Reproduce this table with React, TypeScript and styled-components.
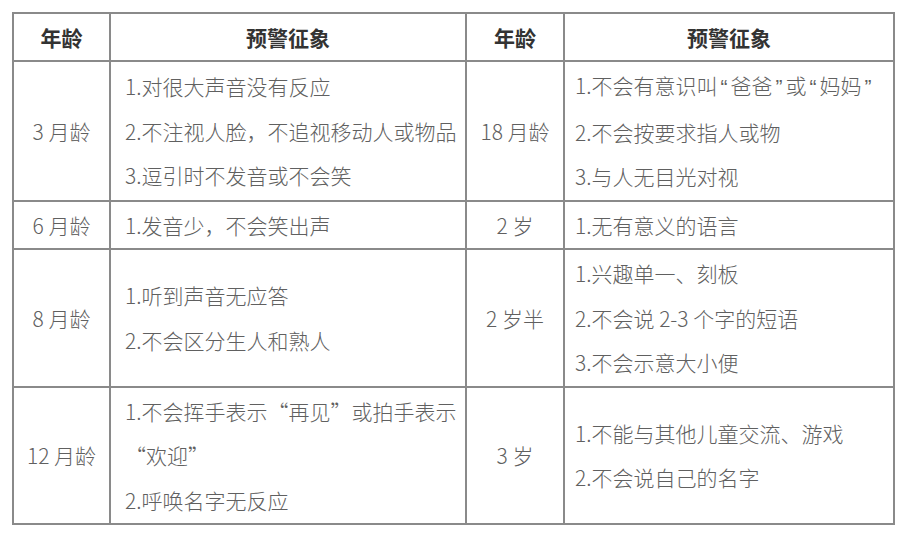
import React from "react";
import styled, { createGlobalStyle } from "styled-components";

const GlobalStyle = createGlobalStyle`
  html, body {
    margin: 0;
    padding: 0;
    background: #fff;
  }
  body {
    font-family: "Noto Sans CJK SC", "Liberation Sans", sans-serif;
  }
`;

const Page = styled.div`
  padding: 12px 0 0 12px;
`;

const Table = styled.table`
  width: 881px;
  table-layout: fixed;
  border-collapse: collapse;
  border: 2px solid #8a8a8a;
  font-size: 21px;
  font-weight: 300;
  color: #606060;
`;

const HeadCell = styled.th`
  height: 46px;
  padding: 0;
  border: 2px solid #8a8a8a;
  font-weight: 700;
  color: #333;
  text-align: center;
  line-height: 42px;
`;

const AgeCell = styled.td`
  padding: 0;
  border: 2px solid #8a8a8a;
  text-align: center;
  vertical-align: middle;
  line-height: 44px;
`;

const SignCell = styled.td<{ $pad: number }>`
  padding: 1px 4px 1px ${(p) => p.$pad}px;
  border: 2px solid #8a8a8a;
  text-align: left;
  vertical-align: middle;
  line-height: 44.5px;
  white-space: nowrap;
`;

const Item = styled.div``;

// quotes in the 18-month cell are half-width ones
const Tight = styled.span`
  font-family: "Liberation Sans", sans-serif;
  margin: 0 3px;
`;

type Row = {
  left: { age: string; signs: React.ReactNode[] };
  right: { age: string; signs: React.ReactNode[] };
};

const rows: Row[] = [
  {
    left: {
      age: "3 月龄",
      signs: [
        "1.对很大声音没有反应",
        "2.不注视人脸，不追视移动人或物品",
        "3.逗引时不发音或不会笑",
      ],
    },
    right: {
      age: "18 月龄",
      signs: [
        <>
          1.不会有意识叫<Tight>“</Tight>爸爸<Tight>”</Tight>或<Tight>“</Tight>妈妈<Tight>”</Tight>
        </>,
        "2.不会按要求指人或物",
        "3.与人无目光对视",
      ],
    },
  },
  {
    left: { age: "6 月龄", signs: ["1.发音少，不会笑出声"] },
    right: { age: "2 岁", signs: ["1.无有意义的语言"] },
  },
  {
    left: { age: "8 月龄", signs: ["1.听到声音无应答", "2.不会区分生人和熟人"] },
    right: {
      age: "2 岁半",
      signs: ["1.兴趣单一、刻板", "2.不会说 2-3 个字的短语", "3.不会示意大小便"],
    },
  },
  {
    left: {
      age: "12 月龄",
      signs: [
        <>
          1.不会挥手表示“再见”或拍手表示
          <br />
          “欢迎”
        </>,
        "2.呼唤名字无反应",
      ],
    },
    right: { age: "3 岁", signs: ["1.不能与其他儿童交流、游戏", "2.不会说自己的名字"] },
  },
];

export default function App() {
  return (
    <>
      <GlobalStyle />
      <Page lang="zh-CN">
        <Table>
          <colgroup>
            <col style={{ width: 97 }} />
            <col style={{ width: 356 }} />
            <col style={{ width: 98 }} />
            <col style={{ width: 330 }} />
          </colgroup>
          <thead>
            <tr>
              <HeadCell>年龄</HeadCell>
              <HeadCell>预警征象</HeadCell>
              <HeadCell>年龄</HeadCell>
              <HeadCell>预警征象</HeadCell>
            </tr>
          </thead>
          <tbody>
            {rows.map((r, i) => (
              <tr key={i}>
                <AgeCell>{r.left.age}</AgeCell>
                <SignCell $pad={14}>
                  {r.left.signs.map((s, j) => (
                    <Item key={j}>{s}</Item>
                  ))}
                </SignCell>
                <AgeCell>{r.right.age}</AgeCell>
                <SignCell $pad={10}>
                  {r.right.signs.map((s, j) => (
                    <Item key={j}>{s}</Item>
                  ))}
                </SignCell>
              </tr>
            ))}
          </tbody>
        </Table>
      </Page>
    </>
  );
}
